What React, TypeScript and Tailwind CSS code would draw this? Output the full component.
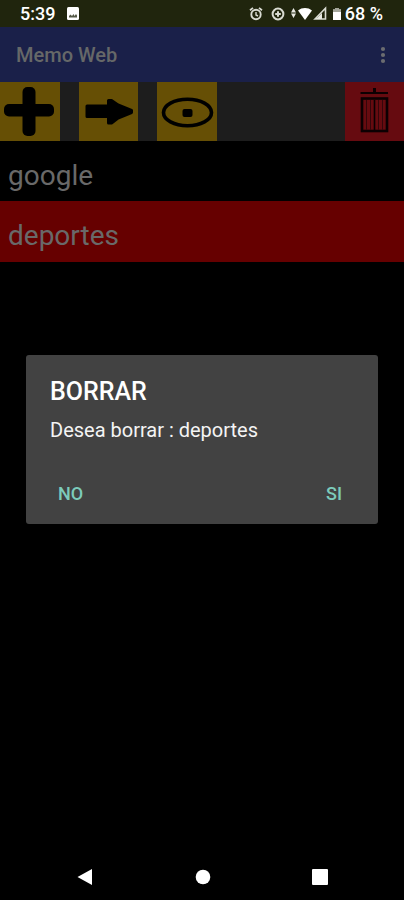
import React from 'react';

interface Memo {
  id: number;
  name: string;
}

const MEMOS: Memo[] = [
  { id: 1, name: 'google' },
  { id: 2, name: 'deportes' },
];

const StatusBar: React.FC = () => (
  <header className="flex h-[27px] items-center justify-between bg-[#20250d] pl-5 pr-[21px] text-lg font-medium leading-none text-white">
    <div className="flex items-center gap-3">
      <span>5:39</span>
      <svg width="12" height="13" viewBox="0 0 12 13" aria-hidden="true">
        <rect width="12" height="13" rx="1.5" fill="#fff" />
        <path d="M2 10.5V9l1.5-1.5L5 9l1.5-2 1 2L9 7l1 1.5v2z" fill="#555a48" />
      </svg>
    </div>
    <div className="flex items-center">
      <svg width="96" height="16" viewBox="0 0 96 16" fill="none" stroke="#d9dbd2" aria-hidden="true">
        {/* alarm */}
        <circle cx="7" cy="8.5" r="4.7" strokeWidth="1.9" />
        <path d="M1 4.3l3-2.4M13 4.3l-3-2.4" strokeWidth="1.8" />
        <path d="M7 6v3l2 1" strokeWidth="1.4" />
        {/* data saver */}
        <circle cx="29" cy="8" r="5.4" strokeWidth="2" />
        <path d="M29 5.2v5.6M26.2 8h5.6" strokeWidth="2" />
        {/* traffic, wifi */}
        <path d="M44.5 2l2.5 4.5h-5zM44.5 12l2.5-4.5h-5z" fill="#e8e9e3" stroke="none" />
        <path d="M49 4.5c4-3.300 10-3.300 14 0L56 14z" fill="#fff" stroke="none" />
        {/* signal */}
        <path d="M66 13L76.5 2.300V13z" strokeWidth="1.6" />
        <path d="M67 13l6-6v6z" fill="#e8e9e3" stroke="none" />
        {/* battery */}
        <path d="M86 2h4v1.500h2V14h-8V3.500h2z" fill="#fff" stroke="none" />
        <path d="M86 2h4v1.500h2V6h-8V3.500h2z" fill="#a4a69b" stroke="none" />
      </svg>
      <span>68 %</span>
    </div>
  </header>
);

const AppBar: React.FC = () => (
  <div className="flex h-[55px] items-center justify-between bg-[#1a2049] pl-4 pr-[17px]">
    <h1 className="text-xl font-medium text-[#666868]">Memo Web</h1>
    <button type="button" aria-label="Más opciones">
      <svg width="8" height="20" viewBox="0 0 8 20" fill="#6b6c70">
        <circle cx="4" cy="4" r="2.1" />
        <circle cx="4" cy="10" r="2.1" />
        <circle cx="4" cy="16" r="2.1" />
      </svg>
    </button>
  </div>
);

const Toolbar: React.FC = () => (
  <div className="flex h-[59px] justify-between bg-[#1d1d1d]">
    <div className="flex gap-[19px]">
      <button type="button" aria-label="Agregar" className="w-[60px] bg-[#664f05]">
        <svg width="60" height="59" viewBox="0 0 60 59">
          <rect x="22.5" y="5" width="13" height="49" rx="5" />
          <rect x="4" y="22" width="50" height="12.5" rx="5" />
        </svg>
      </button>
      <button type="button" aria-label="Ir" className="w-[59px] bg-[#664f05]">
        <svg width="59" height="59" viewBox="0 0 59 59">
          <path
            d="M8 24h21.5v-5.500h3L39 23l13.500 5.500v2L39 36l-6.500 5h-3v-6.500H8z"
            stroke="#000"
            strokeWidth="3"
            strokeLinejoin="round"
          />
        </svg>
      </button>
      <button type="button" aria-label="Ver" className="w-[60px] bg-[#664f05]">
        <svg width="60" height="59" viewBox="0 0 60 59">
          <ellipse cx="30.5" cy="30.5" rx="24" ry="13.3" fill="none" stroke="#000" strokeWidth="3.6" />
          <rect x="25.5" y="27" width="10" height="8" rx="2" />
        </svg>
      </button>
    </div>
    <button type="button" aria-label="Borrar" className="w-[59px] bg-[#660b10]">
      <svg width="59" height="59" viewBox="0 0 59 59" fill="none" stroke="#0c0002">
        <path d="M15.5 11H43" strokeWidth="2" />
        <path d="M29.5 6v5" strokeWidth="3" />
        <rect x="17" y="16.5" width="25" height="32.5" strokeWidth="2.6" />
        <path d="M21.5 18v30M25.5 18v30M33.5 18v30M37.5 18v30" stroke="#35060a" strokeWidth="1" />
        <path d="M29.5 18v30" strokeWidth="1.6" />
      </svg>
    </button>
  </div>
);

const ConfirmDialog: React.FC<{ memo: Memo }> = ({ memo }) => (
  <div className="absolute inset-0 flex items-center justify-center px-[26px]">
    <div
      role="dialog"
      aria-modal="true"
      aria-labelledby="dialog-title"
      className="w-full rounded-[3px] bg-[#424242] px-6 pb-3 pt-[21px]"
    >
      <h2 id="dialog-title" className="text-[25px] font-medium leading-8 text-white">BORRAR</h2>
      <p className="mt-2 text-xl leading-7 text-[#f4f4f4]">Desea borrar : {memo.name}</p>
      <div className="mt-8 flex justify-between text-lg font-medium text-[#7ccbbb]">
        <button type="button" className="h-9 px-2">NO</button>
        <button type="button" className="h-9 px-3">SI</button>
      </div>
    </div>
  </div>
);

const NavigationBar: React.FC = () => (
  <nav className="flex h-12 items-center justify-between bg-black pl-[77px] pr-[76px] pt-0.5">
    <button type="button" aria-label="Atrás">
      <svg width="16" height="16" viewBox="0 0 16 16" fill="#fff">
        <path d="M0.5 8L15 0v16z" />
      </svg>
    </button>
    <button type="button" aria-label="Inicio">
      <svg width="16" height="16" viewBox="0 0 16 16" fill="#fff">
        <circle cx="8" cy="8" r="7.3" />
      </svg>
    </button>
    <button type="button" aria-label="Recientes">
      <svg width="16" height="16" viewBox="0 0 16 16" fill="#fff">
        <rect width="16" height="16" rx="1" />
      </svg>
    </button>
  </nav>
);

const App: React.FC = () => {
  const selected = MEMOS[1];

  return (
    <div className="flex min-h-screen flex-col bg-black font-['Roboto',sans-serif]">
      <StatusBar />
      <main className="relative flex-1">
        <AppBar />
        <Toolbar />
        <ul>
          {MEMOS.map((memo) => (
            <li
              key={memo.id}
              className={`px-2 pb-1 pt-3.5 text-[28px] leading-[42px] text-[#696969] ${memo.id === selected.id ? 'border-b border-[#660000] bg-[#660000]' : 'bg-black'}`}
            >
              {memo.name}
            </li>
          ))}
        </ul>
        <ConfirmDialog memo={selected} />
      </main>
      <NavigationBar />
    </div>
  );
};

export default App;
